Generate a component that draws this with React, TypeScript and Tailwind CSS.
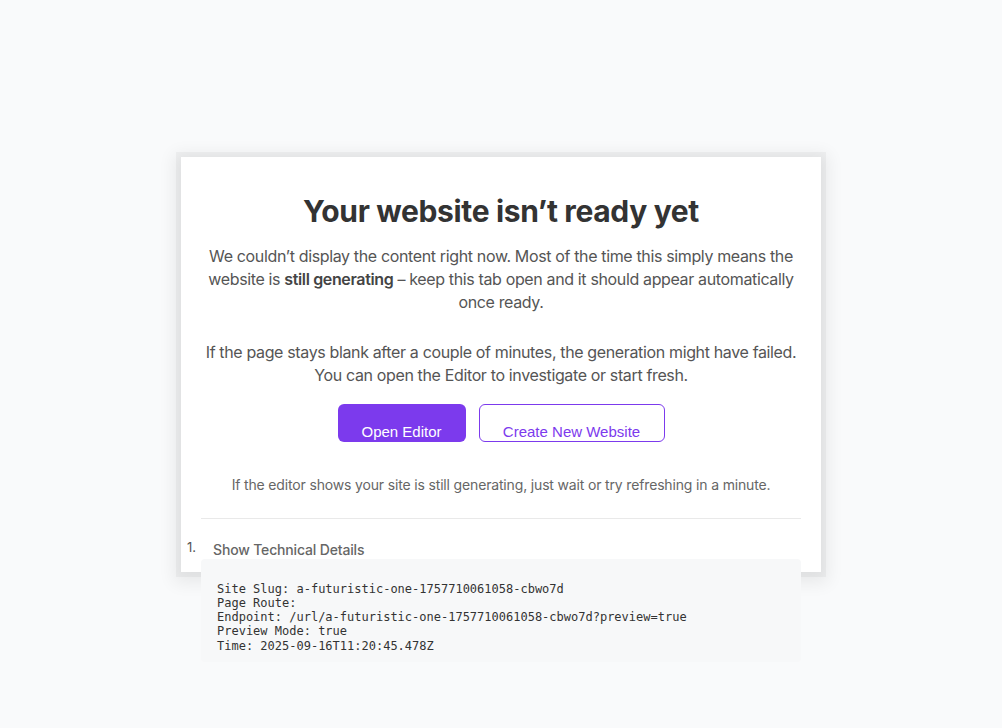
import React from "react";

export default function App() {
  const details = [
    "Site Slug: a-futuristic-one-1757710061058-cbwo7d",
    "Page Route: ",
    "Endpoint: /url/a-futuristic-one-1757710061058-cbwo7d?preview=true",
    "Preview Mode: true",
    "Time: 2025-09-16T11:20:45.478Z",
  ];
  return (
    <div
      className="flex min-h-screen w-full items-center justify-center bg-[#f9fafb]"
      style={{ fontFamily: "Inter, 'Noto Sans', sans-serif" }}
    >
      <div className="flex h-[415px] w-[640px] flex-col bg-white px-5 pt-[36px] shadow-[0_0_0_5px_rgba(0,0,0,0.035),0_4px_16px_7px_rgba(0,0,0,0.07)]">
        <h1 className="text-center text-[30px] font-bold leading-[36px] tracking-[-0.35px] text-[#333333]">
          Your website isn’t ready yet
        </h1>
        <p className="mt-[16px] text-center text-[16px] leading-[23px] tracking-[-0.36px] text-[#555555]">
          We couldn’t display the content right now. Most of the time this simply means the website is{" "}
          <strong className="font-semibold text-[#444444]">still generating</strong> – keep this tab open and it should
          appear automatically once ready.
        </p>
        <p className="mt-[27px] text-center text-[16px] leading-[23px] tracking-[-0.36px] text-[#555555]">
          If the page stays blank after a couple of minutes, the generation might have failed. You can open the Editor
          to investigate or start fresh.
        </p>
        <div
          className="mt-[17px] flex justify-center gap-[13px]"
          style={{ fontFamily: "'Liberation Sans', Arial, sans-serif" }}
        >
          <button className="h-[38px] w-[128px] rounded-[6px] bg-[#7c3aed] pt-[18px] text-[15px] leading-[17px] text-white">
            Open Editor
          </button>
          <button className="h-[38px] w-[186px] rounded-[6px] border border-[#7c3aed] bg-white pt-[17px] text-[15px] leading-[17px] text-[#7c3aed]">
            Create New Website
          </button>
        </div>
        <p className="mt-[33px] text-center text-[14px] leading-[20px] tracking-[-0.16px] text-[#666666]">
          If the editor shows your site is still generating, just wait or try refreshing in a minute.
        </p>
        <div className="mt-[23px] h-px w-full shrink-0 bg-[#e9e9e9]" />
        <div className="mt-[22px] -ml-[14px] flex items-start">
          <span className="w-[26px] text-[13px] leading-[13px] text-[#555555]">1.</span>
          <span className="text-[14px] font-medium leading-[17px] tracking-[-0.16px] text-[#666666]">
            Show Technical Details
          </span>
        </div>
        <pre
          className="mt-px shrink-0 rounded-[4px] bg-[#f7f8f9] pb-[9px] pl-4 pr-4 pt-[23px] text-[12px] leading-[14.3px] text-[#333333]"
          style={{ fontFamily: "'DejaVu Sans Mono', 'Liberation Mono', monospace" }}
        >
          {details.join("\n")}
        </pre>
      </div>
    </div>
  );
}
